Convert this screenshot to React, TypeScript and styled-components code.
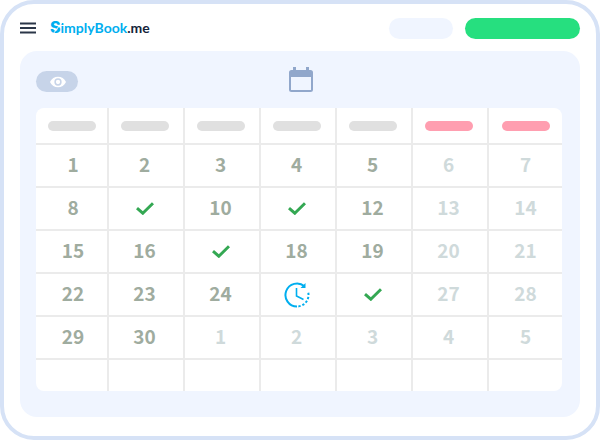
import React from "react";
import styled, { createGlobalStyle } from "styled-components";

const GlobalStyle = createGlobalStyle`
  *, *::before, *::after { box-sizing: border-box; }
  body { margin: 0; background: #fff; font-family: "Noto Sans CJK SC", "Noto Sans", sans-serif; }
  button { border: 0; padding: 0; cursor: pointer; font: inherit; }
`;

const Frame = styled.div`
  border: 4px solid #d6e2f6;
  border-radius: 34px;
  padding: 14px 16px 19px;
  background: #fff;
`;

const Header = styled.header`
  display: flex;
  align-items: center;
  height: 21px;
  margin-bottom: 12px;
`;

const MenuButton = styled.button`
  display: flex;
  margin-right: 14px;
  padding-bottom: 2px;
  background: none;
`;

const Logo = styled.a`
  position: relative;
  margin-right: auto;
  padding-bottom: 3px;
  font: 700 14px/20px "Lato", sans-serif;
  color: #00aeef;
  text-decoration: none;
`;

const Initial = styled.span`
  font: 800 16px/20px "Inter", sans-serif;
`;

const Slash = styled.svg`
  position: absolute;
  left: 0;
  top: 2px;
`;

const LogoSuffix = styled.span`
  color: #14243a;
`;

const PillButton = styled.button<{ $width: number; $color: string }>`
  width: ${(p) => p.$width}px;
  height: 21px;
  margin-left: 12px;
  border-radius: 11px;
  background: ${(p) => p.$color};
`;

const Panel = styled.main`
  padding: 16px 16px 26px;
  border-radius: 17px;
  background: #f0f5ff;
`;

const Toolbar = styled.div`
  display: grid;
  grid-template-columns: 1fr auto 1fr;
  align-items: end;
  height: 25px;
  margin-bottom: 16px;
`;

const ViewButton = styled.button`
  display: flex;
  align-items: center;
  justify-content: center;
  width: 42px;
  height: 21px;
  padding-left: 2px;
  border-radius: 11px;
  background: #c7d4e9;
`;

const DateButton = styled.button`
  display: flex;
  padding-left: 2px;
  background: none;
`;

const Calendar = styled.table`
  width: calc(100% - 2px);
  table-layout: fixed;
  border-spacing: 0;
  border-radius: 8px;
  overflow: hidden;
  background: #fff;
`;

const Column = styled.col<{ $width?: number }>`
  width: ${(p) => (p.$width ? `${p.$width}px` : "auto")};
`;

const HeadCell = styled.th`
  height: 37px;
  padding: 0;
  border-bottom: 2px solid #ebebeb;
  &:not(:last-child) { border-right: 2px solid #ebebeb; }
  &:not(:first-child):not(:last-child) { padding-right: 2px; }
`;

const DayLabel = styled.div<{ $weekend: boolean }>`
  width: 48px;
  height: 10px;
  margin: 0 auto;
  border-radius: 5px;
  background: ${(p) => (p.$weekend ? "#ff9eb0" : "#e0e0e0")};
`;

const DayCell = styled.td<{ $muted: boolean }>`
  height: 43px;
  padding: 0;
  border-bottom: 2px solid #ebebeb;
  text-align: center;
  vertical-align: middle;
  font-size: 19px;
  line-height: 24px;
  font-weight: 700;
  color: ${(p) => (p.$muted ? "#cfdadb" : "#9fac9f")};
  &:first-child { padding-left: 3px; }
  &:not(:last-child) { border-right: 2px solid #ebebeb; }
  &:not(:first-child):not(:last-child) { padding-right: 3px; }
  tr:last-child > & { height: 31px; border-bottom: 0; }
  svg { display: block; margin: 0 auto; }
`;

const DayNumber = styled.div`
  padding-bottom: 4px;
`;

const MenuIcon = () => (
  <svg width="16" height="12" viewBox="0 0 16 12" stroke="#2b3648" strokeWidth="2" aria-hidden="true">
    <path d="M0 1.5H16M0 6H16M0 10.5H16" />
  </svg>
);

const EyeIcon = () => (
  <svg width="16" height="12" viewBox="0 0 16 12" aria-hidden="true">
    <path d="M0 6C1.6 2.5 4.6.7 8 .7S14.400 2.500 16 6C14.400 9.500 11.400 11.300 8 11.300S1.600 9.500 0 6Z" fill="#fff" />
    <circle cx="8" cy="6" r="2.900" fill="#fff" stroke="#c7d4e9" strokeWidth="1.500" />
  </svg>
);

const CalendarIcon = () => (
  <svg width="24" height="25" viewBox="0 0 24 25" aria-hidden="true">
    <path d="M4 0H7V3H17V0H20V3H21.500Q24 3 24 5.500V22.500Q24 25 21.500 25H2.500Q0 25 0 22.500V5.500Q0 3 2.500 3H4ZM2 10V23H22V10Z" fill="#91a7cb" fillRule="evenodd" />
  </svg>
);

const CheckIcon = () => (
  <svg width="18" height="13" viewBox="0 0 18 13" role="img" aria-label="Booked">
    <path d="M1 6.200L6.800 11.200L17 1.200" fill="none" stroke="#34a853" strokeWidth="3" />
  </svg>
);

const ClockIcon = () => (
  <svg width="26" height="26" viewBox="0 0 26 26" fill="none" stroke="#00aeef" strokeWidth="2" role="img" aria-label="Pending">
    <path d="M13 24.500A11.500 11.500 0 1 1 20.500 4.300" />
    <path d="M24.300 10.800A11.500 11.500 0 0 1 13 24.500" strokeDasharray="2.300 1.800" />
    <path d="M12.500 6V14L19.500 17.500" strokeWidth="1.600" />
    <path d="M21.500 1V6H16.500Z" fill="#00aeef" stroke="none" />
  </svg>
);

type Day = { label: string; muted?: boolean };

const parse = (row: string): Day[] =>
  row.split(" ").map((d) => ({ label: d.replace("~", ""), muted: d.startsWith("~") }));

const weeks: Day[][] = [
  parse("1 2 3 4 5 ~6 ~7"),
  parse("8 check 10 check 12 ~13 ~14"),
  parse("15 16 check 18 19 ~20 ~21"),
  parse("22 23 24 clock check ~27 ~28"),
  parse("29 30 ~1 ~2 ~3 ~4 ~5"),
  Array.from({ length: 7 }, () => ({ label: "" })),
];

const weekdays = ["Monday", "Tuesday", "Wednesday", "Thursday", "Friday", "Saturday", "Sunday"];

const DayContent = ({ label }: { label: string }) => {
  if (label === "check") return <CheckIcon />;
  if (label === "clock") return <ClockIcon />;
  return <DayNumber>{label}</DayNumber>;
};

export default function App() {
  return (
    <>
      <GlobalStyle />
      <Frame>
        <Header>
          <MenuButton aria-label="Menu"><MenuIcon /></MenuButton>
          <Logo href="#">
            <Initial>S</Initial>implyBook<LogoSuffix>.me</LogoSuffix>
            <Slash width="12" height="16" viewBox="0 0 12 16" aria-hidden="true">
              <path d="M3 15L11.500 4" stroke="#fff" strokeWidth="1" />
            </Slash>
          </Logo>
          <PillButton $width={64} $color="#f0f5ff" aria-label="Log in" />
          <PillButton $width={115} $color="#26df7f" aria-label="Book now" />
        </Header>
        <Panel>
          <Toolbar>
            <ViewButton aria-label="View"><EyeIcon /></ViewButton>
            <DateButton aria-label="Choose date"><CalendarIcon /></DateButton>
          </Toolbar>
          <Calendar>
            <colgroup>
              <Column $width={73} />
              <Column /><Column /><Column /><Column /><Column />
              <Column $width={73} />
            </colgroup>
            <thead>
              <tr>
                {weekdays.map((name, i) => (
                  <HeadCell key={name} scope="col" aria-label={name}>
                    <DayLabel $weekend={i > 4} />
                  </HeadCell>
                ))}
              </tr>
            </thead>
            <tbody>
              {weeks.map((week, w) => (
                <tr key={w}>
                  {week.map((day, i) => (
                    <DayCell key={i} $muted={!!day.muted}>
                      <DayContent label={day.label} />
                    </DayCell>
                  ))}
                </tr>
              ))}
            </tbody>
          </Calendar>
        </Panel>
      </Frame>
    </>
  );
}
